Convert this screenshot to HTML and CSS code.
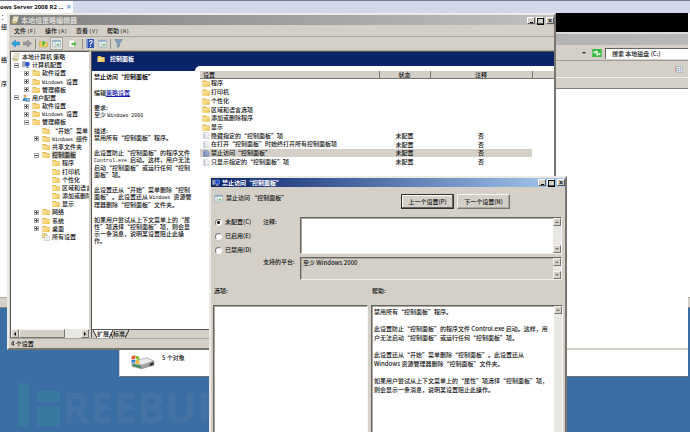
FILE: index.html
```
<!DOCTYPE html>
<html lang="zh-CN">
<head>
<meta charset="utf-8">
<title>本地组策略编辑器</title>
<link rel="stylesheet" href="styles.css">
</head>
<body>
<svg class="defs" aria-hidden="true">
  <defs>
    <linearGradient id="gold" x1="0" y1="0" x2="1" y2="1"><stop offset="0" stop-color="#fdeeb0"/><stop offset="1" stop-color="#eebf4a"/></linearGradient>
    <linearGradient id="metal" x1="0" y1="0" x2="1" y2="1"><stop offset="0" stop-color="#f4f4f4"/><stop offset="1" stop-color="#77797c"/></linearGradient>
  </defs>
  <symbol id="folder" viewBox="0 0 16 14"><path d="M1 1h7l1 2h6v10H1z" fill="#e0b44c"/><path d="M2 4h13v9H1z" fill="url(#gold)"/></symbol>
  <symbol id="doc" viewBox="0 0 16 16"><path d="M2 1h9l4 4v10H2z" fill="#f2f3f6" stroke="#b4b8c2"/><path d="M4 5h2M4 9h2M4 13h2" stroke="#5c6a8c" stroke-width="2"/><path d="M8 9h5M8 13h5" stroke="#c3c7d0"/></symbol>
  <symbol id="docsel" viewBox="0 0 16 16"><path d="M2 1h9l4 4v10H2z" fill="#9aa9cf" stroke="#6f7fae"/><path d="M4 5h2M4 9h2M4 13h2" stroke="#26397c" stroke-width="2"/><path d="M8 9h5M8 13h5" stroke="#6c7cae"/></symbol>
  <symbol id="scroll" viewBox="0 0 16 16"><path d="M5 1h10l-3 12H2z" fill="#f7f1d8" stroke="#b5a777"/><path d="M1 11h9l1 4H3z" fill="#dfcf94" stroke="#a4925a"/><path d="M7 4h5M6 7h5" stroke="#a9a9a9"/></symbol>
  <symbol id="pc" viewBox="0 0 16 16"><path d="M1 2l4-1v11l-4-1z" fill="#a9b3c4" stroke="#6c7688"/><path d="M6 2h9v8H6z" fill="#1f4fd0" stroke="#9fb2dc"/><path d="M9 10h3l2 4H7z" fill="#7f8ca8"/></symbol>
  <symbol id="user" viewBox="0 0 16 16"><circle cx="6" cy="4" r="3" fill="#d8a04c"/><path d="M1 14c0-9 9-9 10 0z" fill="#3f8cc8"/><path d="M8 9h7v6H8z" fill="#86b8e0" stroke="#47749c"/></symbol>
  <symbol id="allset" viewBox="0 0 16 16"><path d="M1 1h8v9H1z" fill="#f0d27c" stroke="#d0a94d"/><path d="M5 5h7l3 3v7H5z" fill="#fafafa" stroke="#aaa"/><path d="M7 9h5M7 12h5" stroke="#b9bdc8"/></symbol>
  <symbol id="panel" viewBox="0 0 16 16"><path d="M1 2h14v12H1z" fill="#fff" stroke="#7d9db0"/><path d="M1 2h14v3H1z" fill="#88a8c0"/><path d="M6 5v9" stroke="#9aa"/><path d="M8 8h5v4H8z" fill="#7cba84"/><path d="M2 8h3M2 11h3" stroke="#88a8c0"/></symbol>
  <symbol id="refresh" viewBox="0 0 28 24"><path d="M0 0h28v24H0z" fill="#36b83b"/><path d="M4 12V7h8V3l6 6-6 5v-3H8v3zM24 11v7h-7v4l-7-6 6-5v3h4v-3z" fill="#eaffea"/></symbol>
</svg>

<main class="desktop">
  <header class="tabbar"><div class="vmtab"><span>ows Server 2008 R2 ...</span><button aria-label="关闭标签">×</button></div></header>

  <div class="watermark" aria-hidden="true">
    <svg viewBox="0 0 44 44"><path d="M0 0h11v43H0zM19 8h23v11H19zM19 24h23v19H19z" fill="#387aa0"/></svg><span>REEBUF</span>
  </div>

  <section class="backdrop">
    <div class="edge"><span>：</span><span>组</span><span>络</span><span>序</span></div>
    <div class="backfoot"></div>
  </section>

  <section class="explorer">
    <div class="black"></div>
    <div class="extitle"></div>
    <div class="address">
      <i class="down"></i>
      <svg class="go"><use href="#refresh"/></svg>
      <input aria-label="搜索" value="搜索 本地磁盘 (C:)">
    </div>
    <div class="extools"><svg viewBox="0 0 16 14"><path d="M1 0v14" stroke="#e4a0a0" stroke-width="2"/><path d="M3 1h12v12H3zM3 5h12M3 9h12M7 1v12M11 1v12" fill="#eef1f5" stroke="#8fa0b4"/></svg></div>
    <div class="excols"></div>
    <div class="exbody"></div>
    <footer class="exfoot">
      <svg viewBox="0 0 46 28"><path d="M2 14L30 6l14 6v8L20 27 2 22z" fill="url(#metal)" stroke="#777"/><path d="M4 14L30 7l12 5-22 7z" fill="#e9ebec"/><path d="M3 17l17 4v5L3 22z" fill="#4a8a63"/><path d="M36 17l7-3v5l-7 3z" fill="#333"/><path d="M1 3l7-2v7l-7 1z" fill="#e8572e"/><path d="M9 2l7 2v7L9 8z" fill="#7ab82e"/><path d="M1 10l7-1v6l-7 0z" fill="#2a87d8"/><path d="M9 10l7 2v6l-7-2z" fill="#f2b92c"/></svg>
      <span>5 个对象</span>
    </footer>
  </section>

  <section class="gpo">
    <div class="bar bar-off">
      <svg class="ic"><use href="#scroll"/></svg><h1>本地组策略编辑器</h1>
      <div class="winbtns"><button class="min" aria-label="最小化"></button><button class="max" aria-label="最大化"></button><button class="cls" aria-label="关闭">×</button></div>
    </div>
    <nav class="menu"><button>文件<b>(F)</b></button><button>操作<b>(A)</b></button><button>查看<b>(V)</b></button><button>帮助<b>(H)</b></button></nav>
    <div class="tools">
      <button aria-label="后退"><svg viewBox="0 0 18 16"><path d="M1 8l8-7v4h8v6H9v4z" fill="#35a4e4" stroke="#1978b8"/></svg></button>
      <button aria-label="前进"><svg viewBox="0 0 18 16"><path d="M17 8L9 1v4H1v6h8v4z" fill="#9a9a9a" stroke="#777"/></svg></button>
      <i class="sep"></i>
      <button aria-label="上一级"><svg viewBox="0 0 18 16"><path d="M1 4h6l2 2h8v9H1z" fill="#f0cf66" stroke="#c49c36"/><path d="M6 11l3-9 4 5-2 1-1 4z" fill="#38b038"/></svg></button>
      <button class="pressed" aria-label="控制台树"><svg><use href="#panel"/></svg></button>
      <button class="wide" aria-label="导出列表"><svg viewBox="0 0 18 16"><path d="M2 1h9l3 3v11H2z" fill="#fff" stroke="#b9b9a4"/><path d="M7 7h5V4l5 5-5 5v-3H7z" fill="#4fbd44"/></svg></button>
      <i class="sep"></i>
      <button aria-label="帮助"><svg viewBox="0 0 16 16"><path d="M1 0h13v16H1z" fill="#2c50b8"/><path d="M2 0v16" stroke="#93a8e4" stroke-width="2"/><path d="M6 5c0-3 6-3 5 0 0 2-3 2-3 5M8 12v2" fill="none" stroke="#fff" stroke-width="2"/></svg></button>
      <button aria-label="操作窗格"><svg><use href="#panel"/></svg></button>
      <i class="sep"></i>
      <button aria-label="筛选器"><svg viewBox="0 0 16 16"><path d="M1 1h14L10 8v5l-4 2V8z" fill="#7f9fbe" stroke="#5c7c9c"/></svg></button>
    </div>
    <div class="split">
      <div class="left">
        <ul class="tree">
          <li><svg class="ic"><use href="#scroll"/></svg><span>本地计算机 策略</span></li>
          <li class="l1"><i class="ex"></i><svg class="ic"><use href="#pc"/></svg><span>计算机配置</span></li>
          <li class="l2"><i class="ex plus"></i><svg class="ic"><use href="#folder"/></svg><span>软件设置</span></li>
          <li class="l2"><i class="ex plus"></i><svg class="ic"><use href="#folder"/></svg><span><b>Windows </b>设置</span></li>
          <li class="l2"><i class="ex plus"></i><svg class="ic"><use href="#folder"/></svg><span>管理模板</span></li>
          <li class="l1"><i class="ex"></i><svg class="ic"><use href="#user"/></svg><span>用户配置</span></li>
          <li class="l2"><i class="ex plus"></i><svg class="ic"><use href="#folder"/></svg><span>软件设置</span></li>
          <li class="l2"><i class="ex plus"></i><svg class="ic"><use href="#folder"/></svg><span><b>Windows </b>设置</span></li>
          <li class="l2"><i class="ex"></i><svg class="ic"><use href="#folder"/></svg><span>管理模板</span></li>
          <li class="l3"><i class="ex none"></i><svg class="ic"><use href="#folder"/></svg><span>“开始”菜单</span></li>
          <li class="l3"><i class="ex plus"></i><svg class="ic"><use href="#folder"/></svg><span><b>Windows </b>组件</span></li>
          <li class="l3"><i class="ex none"></i><svg class="ic"><use href="#folder"/></svg><span>共享文件夹</span></li>
          <li class="l3"><i class="ex"></i><svg class="ic"><use href="#folder"/></svg><span class="sel">控制面板</span></li>
          <li class="l4"><i class="ex none"></i><svg class="ic"><use href="#folder"/></svg><span>程序</span></li>
          <li class="l4"><i class="ex none"></i><svg class="ic"><use href="#folder"/></svg><span>打印机</span></li>
          <li class="l4"><i class="ex none"></i><svg class="ic"><use href="#folder"/></svg><span>个性化</span></li>
          <li class="l4"><i class="ex none"></i><svg class="ic"><use href="#folder"/></svg><span>区域和语言</span></li>
          <li class="l4"><i class="ex none"></i><svg class="ic"><use href="#folder"/></svg><span>添加或删除</span></li>
          <li class="l4"><i class="ex none"></i><svg class="ic"><use href="#folder"/></svg><span>显示</span></li>
          <li class="l3"><i class="ex plus"></i><svg class="ic"><use href="#folder"/></svg><span>网络</span></li>
          <li class="l3"><i class="ex plus"></i><svg class="ic"><use href="#folder"/></svg><span>系统</span></li>
          <li class="l3"><i class="ex plus"></i><svg class="ic"><use href="#folder"/></svg><span>桌面</span></li>
          <li class="l3"><i class="ex none"></i><svg class="ic"><use href="#allset"/></svg><span>所有设置</span></li>
        </ul>
        <div class="hscroll"><button class="sb lt" aria-label="向左"></button><div class="thumb"></div><div class="track"></div><button class="sb rt" aria-label="向右"></button></div>
      </div>
      <div class="right">
        <div class="banner"><svg class="ic"><use href="#folder"/></svg><h2>控制面板</h2></div>
        <div class="cols">
          <article class="desc">
            <h3>禁止访问“控制面板”</h3>
            <p class="edit">编辑<a href="#">策略设置</a></p>
            <p>要求:<br>至少 <b>Windows 2000</b></p>
            <p>描述:<br>禁用所有“控制面板”程序。</p>
            <p>此设置防止“控制面板”的程序文件<br><b>Control.exe </b>启动。这样，用户无法<br>启动“控制面板”或运行任何“控制<br>面板”项。</p>
            <p>此设置还从“开始”菜单删除“控制<br>面板”。此设置还从 <b>Windows </b>资源管<br>理器删除“控制面板”文件夹。</p>
            <p>如果用户尝试从上下文菜单上的“属<br>性”项选择“控制面板”项，则会显<br>示一条消息，说明某设置阻止此操<br>作。</p>
          </article>
          <div class="list">
            <table>
              <thead><tr><th class="c1">设置</th><th class="c2">状态</th><th class="c3">注释</th><th></th></tr></thead>
              <tbody>
                <tr><td><svg class="ic"><use href="#folder"/></svg>程序</td><td></td><td></td></tr>
                <tr><td><svg class="ic"><use href="#folder"/></svg>打印机</td><td></td><td></td></tr>
                <tr><td><svg class="ic"><use href="#folder"/></svg>个性化</td><td></td><td></td></tr>
                <tr><td><svg class="ic"><use href="#folder"/></svg>区域和语言选项</td><td></td><td></td></tr>
                <tr><td><svg class="ic"><use href="#folder"/></svg>添加或删除程序</td><td></td><td></td></tr>
                <tr><td><svg class="ic"><use href="#folder"/></svg>显示</td><td></td><td></td></tr>
                <tr><td><svg class="ic"><use href="#doc"/></svg>隐藏指定的“控制面板”项</td><td>未配置</td><td>否</td></tr>
                <tr><td><svg class="ic"><use href="#doc"/></svg>在打开“控制面板”时始终打开所有控制面板项</td><td>未配置</td><td>否</td></tr>
                <tr class="on"><td><svg class="ic"><use href="#docsel"/></svg>禁止访问“控制面板”</td><td>未配置</td><td>否</td></tr>
                <tr><td><svg class="ic"><use href="#doc"/></svg>只显示指定的“控制面板”项</td><td>未配置</td><td>否</td></tr>
              </tbody>
            </table>
          </div>
        </div>
        <div class="views">
          <svg viewBox="0 0 4 8"><path d="M0 0h4v8z" fill="#fff"/><path d="M0 0l4 8" stroke="#222"/></svg><button class="cur">扩展</button><svg viewBox="0 0 4 8"><path d="M0 0h4L0 8z" fill="#fff"/><path d="M4 0L0 8M2 4l2 4" stroke="#222"/></svg><button>标准</button><svg viewBox="0 0 4 8"><path d="M4 0L0 8" stroke="#222"/></svg>
        </div>
      </div>
    </div>
    <footer class="status">4 个设置</footer>
  </section>

  <section class="dialog">
    <div class="bar bar-on">
      <svg class="ic"><use href="#pc"/></svg><h1>禁止访问“控制面板”</h1>
      <div class="winbtns"><button class="min" aria-label="最小化"></button><button class="max" aria-label="最大化"></button><button class="cls" aria-label="关闭">×</button></div>
    </div>
    <div class="dhead">
      <svg><use href="#panel"/></svg><span>禁止访问 “控制面板”</span>
      <div class="dbtns"><button class="def">上一个设置(P)</button><button>下一个设置(N)</button></div>
    </div>
    <form class="fields">
      <div class="radios">
        <label><input type="radio" name="state" checked>未配置(C)</label>
        <label><input type="radio" name="state">已启用(E)</label>
        <label><input type="radio" name="state">已禁用(D)</label>
      </div>
      <label for="note">注释:</label>
      <div class="box tall"><textarea id="note"></textarea><div class="vs"><button type="button" class="sb up" aria-label="向上"></button><button type="button" class="sb dn" aria-label="向下"></button></div></div>
      <label for="plat">支持的平台:</label>
      <div class="box gray"><textarea id="plat" readonly>至少 Windows 2000</textarea><div class="vs"><button type="button" class="sb up" aria-label="向上"></button><button type="button" class="sb dn" aria-label="向下"></button></div></div>
    </form>
    <div class="panes">
      <h4>选项:</h4><h4>帮助:</h4>
      <div class="box"></div>
      <div class="box">
        <div class="help">
          <p>禁用所有“控制面板”程序。</p>
          <p>此设置防止“控制面板”的程序文件 Control.exe 启动。这样，用<br>户无法启动“控制面板”或运行任何“控制面板”项。</p>
          <p>此设置还从“开始”菜单删除“控制面板”。此设置还从<br>Windows 资源管理器删除“控制面板”文件夹。</p>
          <p>如果用户尝试从上下文菜单上的“属性”项选择“控制面板”项，<br>则会显示一条消息，说明某设置阻止此操作。</p>
        </div>
        <div class="vs"><button class="sb up" aria-label="向上"></button></div>
      </div>
    </div>
  </section>
</main>
</body>
</html>
```

FILE: styles.css
```
:root {
  --face: #d4d0c8;
  --dark: #808080;
  --cjk: "Noto Sans CJK SC", sans-serif;
}
* { box-sizing: border-box; }
body {
  margin: 0;
  overflow: hidden;
  background: #3a6ea5;
  color: #111;
  font: 500 6px/8px var(--cjk);
}
button, input, textarea { font: inherit; color: inherit; padding: 0; margin: 0; border: 0; background: none; border-radius: 0; }
h1, h2, h3, h4, p, ul { margin: 0; padding: 0; font-size: 6px; }
.defs { position: absolute; width: 0; height: 0; }
.desktop { position: relative; height: 100vh; overflow: hidden; }
.desktop > section { position: absolute; display: flex; flex-direction: column; }
.ic { width: 8px; height: 8px; flex: none; }
b { font: 5px "Liberation Mono", monospace; white-space: pre; }

/* tab strip above the virtual desktop */
.tabbar { display: flex; height: 13px; background: #d2d8ec; border-top: 1px solid #72748a; }
.vmtab { display: flex; align-items: center; gap: 3px; width: 73px; background: #fff; font: bold 6px/11px "Open Sans", sans-serif; white-space: nowrap; }
.vmtab button { color: #5a9ac8; font-size: 8px; line-height: 10px; }

.watermark { position: absolute; left: 18px; bottom: 0; display: flex; height: 50px; color: #4673a6; font: bold 42px/50px "Open Sans", sans-serif; }
.watermark svg { width: 44px; height: 44px; margin-top: 1px; }

/* rear windows */
.backdrop { left: 0; right: 0; top: 13px; bottom: 124px; background: #fff; border-bottom: 1px solid #8a8880; justify-content: space-between; }
.edge { display: grid; grid-template-rows: 10px 33px 24px 8px; width: 7px; direction: rtl; overflow: hidden; }
.backfoot { height: 10px; background: var(--face); border-top: 1px solid #aaa79f; }

.explorer { left: 119px; right: 2px; top: 13px; bottom: 55px; background: #fff; border-bottom: 1px solid #77756f; border-left: 1px solid var(--face); }
.black { height: 19px; background: #000; }
.extitle { height: 13px; background: linear-gradient(90deg, #a2a2a2, #b8b8b8); border-top: 2px solid #dcdad4; }
.address { display: flex; justify-content: flex-end; align-items: center; gap: 3px; height: 16px; padding-top: 1px; background: var(--face); border-bottom: 1px solid #a09d96; }
.address input { width: 83px; height: 11px; padding-left: 6px; background: #fff; border-top: 1px solid #666; border-left: 1px solid #666; }
.go { width: 10px; height: 8px; }
.down { border: 2px solid transparent; border-top-color: #222; border-bottom: 0; margin-right: 3px; }
.extools { display: flex; justify-content: flex-end; align-items: center; height: 17px; padding-right: 5px; background: var(--face); border-bottom: 1px solid #f0eee8; }
.extools svg { width: 8px; height: 7px; }
.excols { height: 11px; background: var(--face); border-bottom: 1px solid var(--dark); }
.exbody { flex: 1; }
.exfoot { display: flex; gap: 7px; height: 28px; padding: 4px 11px; border-top: 2px solid var(--face); }
.exfoot svg { width: 24px; height: 16px; }

/* shared window chrome */
.gpo, .dialog { background: var(--face); border: 2px solid; border-color: #eceae4 #77756f #77756f #eceae4; }
.bar { display: flex; align-items: center; gap: 2px; height: 9px; padding-left: 1px; flex: none; }
.bar-off { background: linear-gradient(90deg, #808080, #c0c0c0); color: #dedbd4; }
.bar-off h1 { font-size: 7px; }
.bar-on { background: linear-gradient(90deg, #0a246a, #a6caf0); color: #fff; }
.winbtns { display: flex; gap: 1px; margin-left: auto; }
.winbtns button { display: grid; place-items: center; width: 8px; height: 7px; background: var(--face); border: 1px solid; border-color: #fff #555 #555 #fff; color: #000; font: bold 7px/5px "Liberation Sans", sans-serif; }
.winbtns .cls { margin-left: 1px; }
.min::before { content: ""; width: 3px; height: 1px; background: #000; align-self: end; }
.max::before { content: ""; width: 5px; height: 5px; border: 1px solid #000; }

/* policy editor */
.gpo { left: 7px; right: 134px; top: 13px; bottom: 82px; padding: 0 0 0 1px; }
.gpo .bar { height: 10px; }
.menu { display: flex; align-items: center; gap: 9px; height: 12px; padding-left: 4px; border-bottom: 1px solid #aaa79f; }
.menu b { padding-left: 1px; }
.menu button { white-space: nowrap; }
.tools { display: flex; align-items: center; gap: 3px; height: 14px; padding-left: 1px; border-bottom: 1px solid #aaa79f; }
.tools button { display: grid; place-items: center; width: 9px; height: 11px; }
.tools svg { width: 9px; height: 9px; }
.tools .pressed { width: 11px; background: #e9e7e2; outline: 1px solid #aaa79f; }
.tools .wide { width: 14px; }
.sep { width: 1px; height: 10px; background: #8f8c85; }
.split { display: grid; grid-template-columns: 79px 1fr; gap: 2px; flex: 1; min-height: 0; }
.left { display: flex; flex-direction: column; justify-content: space-between; background: #fff; border-top: 1px solid #555; overflow: hidden; }
.left, .right { border-left: 1px solid #555; }
.tree { display: grid; grid-auto-rows: 1fr; height: 188px; margin-top: 1px; list-style: none; }
.tree li { display: flex; align-items: center; gap: 2px; padding-left: 1px; white-space: nowrap; }
.tree .l1 { padding-left: 3px; }
.tree .l2 { padding-left: 13px; }
.tree .l3 { padding-left: 23px; }
.tree .l4 { padding-left: 33px; }
.ex { width: 5px; height: 5px; border: 1px solid #aaa; margin-right: 1px; flex: none; background: linear-gradient(#444, #444) center / 3px 1px no-repeat; }
.plus { background: linear-gradient(#444, #444) center / 3px 1px no-repeat, linear-gradient(#444, #444) center / 1px 3px no-repeat; }
.none { visibility: hidden; }
.sel { background: var(--face); }
.hscroll { display: grid; grid-template-columns: 8px 46px 1fr 8px; height: 9px; background: #e9e7e2; }
.thumb, .sb { background: var(--face); border: 1px solid; border-color: #f6f5f1 #77756f #77756f #f6f5f1; }
.sb { display: grid; place-items: center; width: 8px; height: 8px; }
.sb::before { content: ""; border: 2px solid transparent; }
.lt::before { border-right-color: #000; border-left: 0; }
.rt::before { border-left-color: #000; border-right: 0; }
.up::before { border-bottom-color: #77756f; border-top: 0; }
.dn::before { border-top-color: #77756f; border-bottom: 0; }
.hscroll .sb { height: 9px; }

.right { display: flex; flex-direction: column; min-width: 0; background: #fff; border-top: 1px solid #555; }
.banner { display: flex; align-items: center; gap: 5px; height: 14px; padding-left: 5px; background: #0a246a; color: #fff; }
.cols { display: grid; grid-template-columns: 103px 1fr; flex: 1; min-height: 0; background: linear-gradient(#0a246a, #0a246a) 0 0 / 120px 5px no-repeat; }
.desc { line-height: 7px; padding: 7px 0 0 2px; white-space: nowrap; }
.desc h3 { margin-bottom: 9px; line-height: 7px; }
.desc p { margin-bottom: 8px; }
.desc b { line-height: 6px; }
.desc a { color: #1a1ab0; }
.list { background: #fff; border-top-left-radius: 5px; padding: 5px 0 0 5px; }
table { width: 100%; height: 95px; table-layout: fixed; border-collapse: collapse; line-height: 7px; }
th, td { padding: 0; font-weight: 500; text-align: center; white-space: nowrap; }
th { background: var(--face); border-right: 1px solid #77756f; border-bottom: 1px solid #77756f; }
th:first-child, td:first-child { text-align: left; }
th:first-child { padding-left: 3px; }
th:last-child { border-right: 0; }
td .ic { margin: 0 1px 0 2px; vertical-align: middle; height: 7px; }
.c1 { width: 179px; }
.c2 { width: 51px; }
.c3 { width: 102px; }
.on td { background: var(--face); }
.views { display: flex; height: 9px; padding-left: 1px; background: var(--face); border-top: 1px solid #555; }
.views svg { width: 4px; height: 8px; fill: none; flex: none; }
.views button { height: 8px; white-space: nowrap; }
.views .cur { background: #fff; }
.status { height: 10px; padding-left: 1px; border-top: 1px solid #aaa79f; line-height: 9px; }

/* policy dialog */
.dialog { left: 209px; right: 123px; top: 176px; bottom: 0; border-bottom: 0; font-family: "Noto Sans CJK SC", "Open Sans", sans-serif; }
.dhead { display: flex; align-items: flex-start; gap: 3px; height: 28px; padding: 7px 55px 0 3px; }
.dhead svg { width: 9px; height: 9px; }
.dbtns { display: flex; gap: 3px; margin-left: auto; }
.dbtns button { width: 53px; height: 15px; border: 1px solid; border-color: #f6f5f1 #77756f #77756f #f6f5f1; box-shadow: inset -1px -1px #aaa79f; }
.dbtns .def { border-color: #333; box-shadow: inset -1px -1px #666, inset 1px 1px #fff; }
.fields { display: grid; grid-template-columns: 49px 34px 1fr; grid-template-rows: 37px 23px; gap: 3px 0; padding: 2px 3px 0 3px; }
.fields > label { line-height: 9px; white-space: nowrap; }
.radios { display: flex; flex-direction: column; gap: 4px; grid-row: span 2; }
.radios label { display: flex; align-items: center; gap: 3px; height: 10px; padding-left: 1px; }
.radios input { appearance: none; width: 7px; height: 7px; border: 1px solid; border-color: #77756f #f6f5f1 #f6f5f1 #77756f; border-radius: 50%; background: #fff; }
.radios input:checked { background: radial-gradient(circle, #000 1px, #fff 2px); }
.box { display: flex; min-width: 0; background: #fff; border: 1px solid; border-color: #66645e #f6f5f1 #f6f5f1 #66645e; box-shadow: inset 1px 1px #aaa79f; }
.fields .box { margin-left: 3px; }
.box textarea { flex: 1; min-width: 0; resize: none; padding: 1px 2px; overflow: hidden; outline: 0; }
.box.gray { background: var(--face); }
.vs { display: flex; flex-direction: column; justify-content: space-between; width: 8px; background: #e9e7e2; }
.panes { display: grid; grid-template-columns: 155px 1fr; grid-template-rows: 18px 1fr; gap: 0 3px; flex: 1; padding: 7px 2px 0; }
.panes h4 { font-weight: 500; padding-left: 1px; }
.panes .box { border-bottom: 0; }
.help { flex: 1; padding: 1px 2px; line-height: 9px; white-space: nowrap; }
.help p { margin-bottom: 8px; }
```
